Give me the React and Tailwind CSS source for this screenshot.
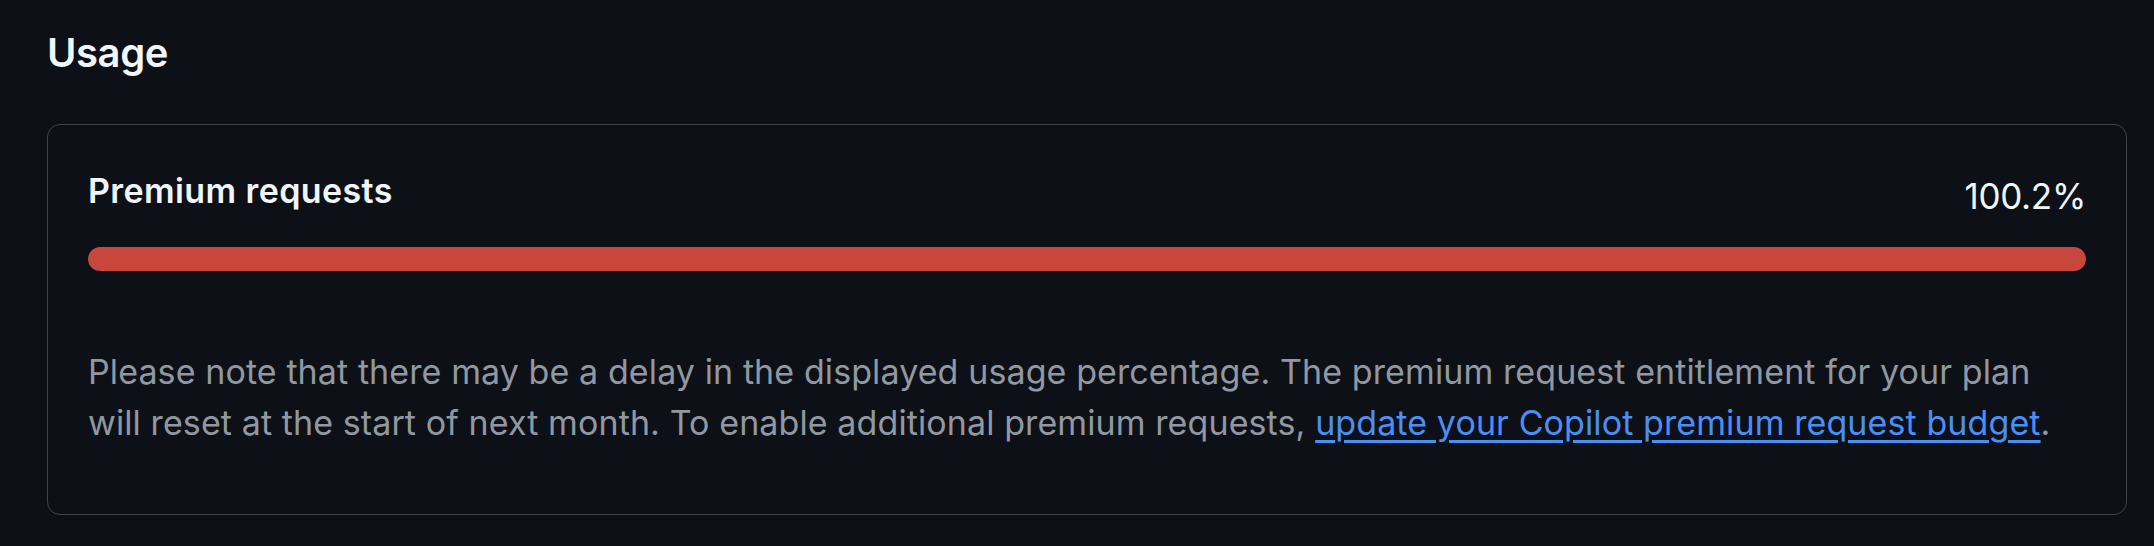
export default function App() {
  const usage = 100.2;
  return (
    <div
      className="min-h-[546px] w-full bg-[#0d1117] pl-[47px] pr-[27px] pt-[29px] pb-[30px]"
      style={{ fontFamily: 'Inter, "Noto Sans", sans-serif' }}
    >
      <h2 className="text-[40px] leading-[48px] font-semibold text-[#f0f6fc] tracking-[-0.4px]">Usage</h2>

      <div className="mt-[47px] rounded-[13px] border border-[#3d444d] pl-[40px] pr-[40px] pt-[42px] pb-[66px]">
        <div className="flex items-start justify-between">
          <h3 className="text-[34px] leading-[48px] font-semibold text-[#f0f6fc] tracking-[0.4px]">
            Premium requests
          </h3>
          <span className="mt-[5px] text-[35px] leading-[48px] text-[#f0f6fc] tracking-[-0.3px]">
            {usage}%
          </span>
        </div>

        <div className="mt-[27px] h-[24px] w-full overflow-hidden rounded-full bg-[#3d444d]">
          <div className="h-full rounded-full bg-[#c9463d]" style={{ width: `${Math.min(usage, 100)}%` }} />
        </div>

        <p className="mt-[75px] text-[34px] leading-[51px] text-[#9198a1] tracking-[0.1px]">
          Please note that there may be a delay in the displayed usage percentage. The premium request entitlement
          for your plan will reset at the start of next month. To enable additional premium requests,{' '}
          <a href="#" className="text-[#4a8ff5] underline underline-offset-[5px]">
            update your Copilot premium request budget
          </a>
          .
        </p>
      </div>
    </div>
  );
}
